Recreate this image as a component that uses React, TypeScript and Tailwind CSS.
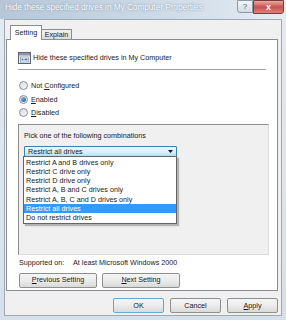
import React from 'react';

const DRIVE_OPTIONS = [
  'Restrict A and B drives only',
  'Restrict C drive only',
  'Restrict D drive only',
  'Restrict A, B and C drives only',
  'Restrict A, B, C and D drives only',
  'Restrict all drives',
  'Do not restrict drives',
];

const Radio: React.FC<{ checked?: boolean; label: React.ReactNode }> = ({ checked, label }) => (
  <div className="flex items-center h-[13.5px] gap-[3px]">
    <div className="w-[9px] h-[9px] rounded-full border border-[#8a8f96] bg-gradient-to-br from-[#d8dbe0] to-[#f6f6f6] flex items-center justify-center">
      {checked && <div className="w-[5px] h-[5px] rounded-full bg-gradient-to-br from-[#7fc0ef] to-[#1b5e9e]" />}
    </div>
    <span>{label}</span>
  </div>
);

const Btn: React.FC<{ w: string; focus?: boolean; children: React.ReactNode }> = ({ w, focus, children }) => (
  <div
    className={`${w} h-[15px] rounded-[2px] border ${
      focus ? 'border-[#5ea9d6]' : 'border-[#8e8f8f]'
    } bg-gradient-to-b from-[#f4f4f4] via-[#ececec] to-[#d9d9d9] flex items-center justify-center`}
  >
    {children}
  </div>
);

const PolicyIcon = () => (
  <svg width="13" height="13" viewBox="0 0 13 13">
    <rect x="0.5" y="1.5" width="12" height="11" fill="#e8eaec" stroke="#5b6470" />
    <rect x="1" y="2" width="11" height="2.5" fill="#8a97a6" />
    <rect x="2.5" y="6" width="8" height="5" fill="#fff" stroke="#7a8591" strokeWidth="0.6" />
    <rect x="3.5" y="7.5" width="2" height="2" fill="#3a7bc8" />
    <rect x="6.5" y="7.5" width="3" height="2" fill="#3a7bc8" />
  </svg>
);

const App: React.FC = () => {
  return (
    <div className="w-[286px] h-[320px] overflow-hidden bg-gradient-to-b from-[#e3ebf4] to-[#d5e0eb] flex flex-col font-['Liberation_Sans',Arial,sans-serif] text-[7.2px] text-[#1a1a1a] leading-none">
      {/* title bar */}
      <div className="h-[19px] flex items-start shrink-0 bg-gradient-to-r from-[#b7c7d8] via-[#cbd8e5] to-[#e6edf4]">
        <div className="flex-1 pl-[5px] pt-[4px] text-[8.2px] text-white [text-shadow:0_0_3px_#8ba2ba,0_0_1px_#7a90a8] whitespace-nowrap">
          Hide these specified drives in My Computer Properties
        </div>
        <div className="flex mr-[2px]">
          <div className="w-[16px] h-[13px] border border-[#8d99a6] rounded-bl-[3px] bg-gradient-to-b from-[#f3f6f9] to-[#d2dbe4] flex items-center justify-center text-[8px] text-[#4e5c6b]">
            ?
          </div>
          <div className="w-[31px] h-[14px] border border-[#7b3a3a] rounded-br-[3px] bg-gradient-to-b from-[#e8a99f] via-[#c75050] to-[#d9837a] flex items-center justify-center text-[9px] font-bold text-white">
            x
          </div>
        </div>
      </div>

      {/* client area */}
      <div className="mx-[4px] h-[297px] bg-[#f0f0f0] border border-[#a0a8b2] flex flex-col pl-[1px] pr-[3px]">
        {/* tabs */}
        <div className="flex items-end pl-[4px] pt-[5px] h-[20px] relative z-10">
          <div className="w-[32px] h-[15px] bg-white border border-[#898c95] border-b-0 flex items-center justify-center pb-[1px]">
            Setting
          </div>
          <div className="w-[30px] h-[11px] bg-gradient-to-b from-[#f2f2f2] to-[#dcdcdc] border border-[#898c95] border-l-0 flex items-center justify-center">
            Explain
          </div>
        </div>

        {/* tab panel */}
        <div className="h-[252px] -mt-[1px] bg-white border border-[#898c95] flex flex-col px-[11px]">
          <div className="flex items-center gap-[2px] mt-[11px] h-[13px]">
            <PolicyIcon />
            <span>Hide these specified drives in My Computer</span>
          </div>
          <div className="mt-[5px] h-px bg-[#a0a0a0]" />

          <div className="mt-[9px] flex flex-col pl-[1px]">
            <Radio label={<>Not <span className="underline">C</span>onfigured</>} />
            <Radio checked label={<><span className="underline">E</span>nabled</>} />
            <Radio label={<><span className="underline">D</span>isabled</>} />
          </div>

          {/* options box */}
          <div className="mt-[4px] h-[131px] w-[251px] bg-[#f0f0f0] border border-t-[#8c8c8c] border-l-[#8c8c8c] border-r-[#dcdcdc] border-b-[#dcdcdc] px-[5px] pt-[7px] relative">
            <div>Pick one of the following combinations</div>
            <div className="mt-[7px] w-[153px] h-[12px] border border-[#3c7fb1] rounded-[1px] bg-gradient-to-b from-[#eaf6fd] via-[#d9f0fc] to-[#a7d9f5] flex items-center pl-[3px] pr-[3px]">
              <span className="flex-1">Restrict all drives</span>
              <svg width="5" height="3" viewBox="0 0 5 3">
                <path d="M0 0h5L2.5 3z" fill="#1a1a1a" />
              </svg>
            </div>
            {/* dropdown list */}
            <div className="absolute left-[4px] top-[31px] w-[154px] h-[68px] bg-white border border-[#646464] shadow-[2px_2px_1px_rgba(0,0,0,0.25)] flex flex-col pt-[1px]">
              {DRIVE_OPTIONS.map((opt) => (
                <div
                  key={opt}
                  className={`h-[9.4px] flex items-center pl-[2px] ${
                    opt === 'Restrict all drives' ? 'bg-[#3399ff] text-white' : ''
                  }`}
                >
                  {opt}
                </div>
              ))}
            </div>
          </div>

          <div className="mt-[4px] h-[9px] flex items-center pl-[1px]">
            <span className="w-[54px]">Supported on:</span>
            <span>At least Microsoft Windows 2000</span>
          </div>

          <div className="mt-[5px] flex gap-[5px] pl-[1px]">
            <Btn w="w-[78px]">
              <span className="underline">P</span>revious Setting
            </Btn>
            <Btn w="w-[78px]">
              <span className="underline">N</span>ext Setting
            </Btn>
          </div>
        </div>

        {/* dialog buttons */}
        <div className="mt-[7px] flex justify-end gap-[6px]">
          <Btn w="w-[51px]" focus>
            OK
          </Btn>
          <Btn w="w-[51px]">Cancel</Btn>
          <Btn w="w-[51px]">
            <span className="underline">A</span>pply
          </Btn>
        </div>
      </div>
    </div>
  );
};

export default App;
